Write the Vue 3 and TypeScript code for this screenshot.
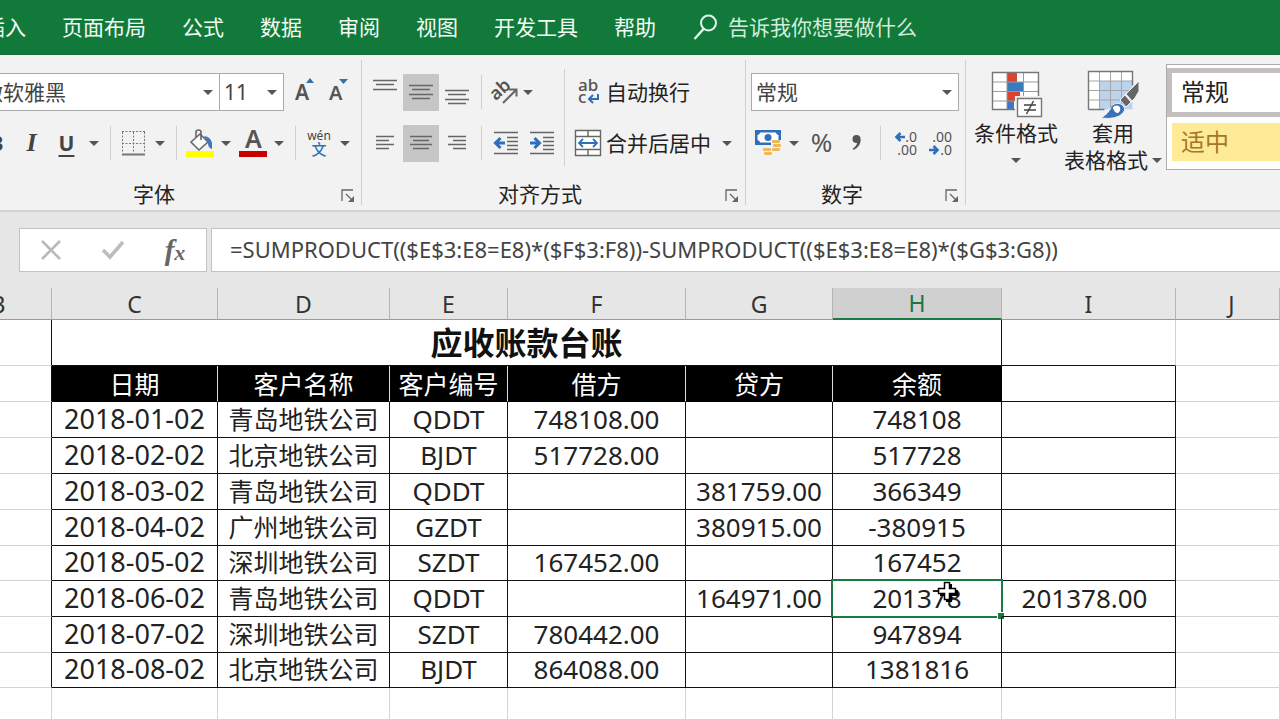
<script setup lang="ts">
import { ref } from 'vue'

interface Entry {
  date: string
  customer: string
  code: string
  debit: string
  credit: string
  balance: string
  check: string
}

const tabs: string[] = ['插入', '页面布局', '公式', '数据', '审阅', '视图', '开发工具', '帮助']
const columns: string[] = ['B', 'C', 'D', 'E', 'F', 'G', 'H', 'I', 'J']
const headings: string[] = ['日期', '客户名称', '客户编号', '借方', '贷方', '余额']

const entries: Entry[] = [
  { date: '2018-01-02', customer: '青岛地铁公司', code: 'QDDT', debit: '748108.00', credit: '', balance: '748108', check: '' },
  { date: '2018-02-02', customer: '北京地铁公司', code: 'BJDT', debit: '517728.00', credit: '', balance: '517728', check: '' },
  { date: '2018-03-02', customer: '青岛地铁公司', code: 'QDDT', debit: '', credit: '381759.00', balance: '366349', check: '' },
  { date: '2018-04-02', customer: '广州地铁公司', code: 'GZDT', debit: '', credit: '380915.00', balance: '-380915', check: '' },
  { date: '2018-05-02', customer: '深圳地铁公司', code: 'SZDT', debit: '167452.00', credit: '', balance: '167452', check: '' },
  { date: '2018-06-02', customer: '青岛地铁公司', code: 'QDDT', debit: '', credit: '164971.00', balance: '201378', check: '201378.00' },
  { date: '2018-07-02', customer: '深圳地铁公司', code: 'SZDT', debit: '780442.00', credit: '', balance: '947894', check: '' },
  { date: '2018-08-02', customer: '北京地铁公司', code: 'BJDT', debit: '864088.00', credit: '', balance: '1381816', check: '' },
]

const selectedRow = ref<number>(5)
const formula = ref<string>('=SUMPRODUCT(($E$3:E8=E8)*($F$3:F8))-SUMPRODUCT(($E$3:E8=E8)*($G$3:G8))')
</script>

<template>
  <div class="app">
    <nav class="tabs" aria-label="功能区">
      <button v-for="t in tabs" :key="t" type="button" class="tab">{{ t }}</button>
      <label class="tell">
        <svg width="26" height="28" viewBox="0 0 26 28" fill="none" stroke="#e6f5ea" stroke-width="2" aria-hidden="true">
          <circle cx="16.500" cy="10" r="7.500" /><path d="M11.500 16 2.500 26" stroke-width="2.400" />
        </svg>
        <input type="text" placeholder="告诉我你想要做什么" aria-label="告诉我你想要做什么" />
      </label>
    </nav>

    <div class="ribbon">
      <section class="group font-group">
        <div class="line">
          <span class="combo name">
            <select aria-label="字体名称"><option>微软雅黑</option></select>
            <i class="tri"></i>
          </span>
          <span class="combo size">
            <select aria-label="字号"><option>11</option></select>
            <i class="tri"></i>
          </span>
          <button type="button" class="ico first" aria-label="增大字号">
            <svg width="26" height="32" viewBox="0 0 26 32"><text x="3" y="24" class="g" font-size="21">A</text><path d="M14 7l4-5 4 5z" fill="#3b6fa5" /></svg>
          </button>
          <button type="button" class="ico" aria-label="减小字号">
            <svg width="26" height="32" viewBox="0 0 26 32"><text x="4" y="24" class="g" font-size="20">A</text><path d="M14 3h9l-4.500 5z" fill="#3b6fa5" /></svg>
          </button>
        </div>
        <div class="line second">
          <button type="button" class="mid bold">B</button>
          <button type="button" class="mid ital">I</button>
          <button type="button" class="mid under">U</button>
          <button type="button" class="drop" aria-label="下划线选项"><i class="tri"></i></button>
          <span class="sep"></span>
          <button type="button" class="ico" aria-label="边框">
            <svg width="25" height="26" viewBox="0 0 25 26" fill="none" stroke="#777" stroke-width="1"><path d="M1 1.500H24M1.500 2V23M12.500 2V23M23.500 2V23M1 13.500H24" stroke-dasharray="2 1.500" /><path d="M1 24.500H24" stroke-width="2" /></svg>
          </button>
          <button type="button" class="drop" aria-label="边框选项"><i class="tri"></i></button>
          <span class="sep"></span>
          <button type="button" class="ico" aria-label="填充颜色">
            <svg width="30" height="30" viewBox="0 0 30 30" fill="none"><rect x="1" y="23" width="28" height="6" fill="#ffff00" /><path d="M6 14 15 6l8 8-9 8z" fill="#fafafa" stroke="#666" stroke-width="1.600" /><path d="M11 9V4q0-2 2.500-2T16 4v8" stroke="#666" stroke-width="1.600" /><path d="M19 8q7 1 8 7v6q-4-1-4-6z" fill="#3d78b8" /></svg>
          </button>
          <button type="button" class="drop" aria-label="填充颜色选项"><i class="tri"></i></button>
          <button type="button" class="ico" aria-label="字体颜色">
            <svg width="30" height="30" viewBox="0 0 30 30"><text x="7" y="20" class="g" font-size="25">A</text><rect x="1" y="23" width="28" height="6" fill="#c80000" /></svg>
          </button>
          <button type="button" class="drop" aria-label="字体颜色选项"><i class="tri"></i></button>
          <span class="sep"></span>
          <button type="button" class="ico" aria-label="拼音指南">
            <svg width="26" height="30" viewBox="0 0 26 30"><text x="13" y="12" class="py" text-anchor="middle">wén</text><text x="13" y="27" class="wen" text-anchor="middle">文</text></svg>
          </button>
          <button type="button" class="drop" aria-label="拼音选项"><i class="tri"></i></button>
        </div>
        <div class="caption"><span>字体</span><button type="button" class="launch" aria-label="字体设置"><svg width="14" height="14" viewBox="0 0 14 14" fill="none" stroke="#666" stroke-width="1.300"><path d="M1 12V1H12M5 5l6 6" /><path d="M13 7v6H7z" fill="#666" stroke="none" /></svg></button></div>
      </section>

      <section class="group align-group">
        <div class="cols">
          <div class="left">
            <div class="line">
              <button type="button" class="al" aria-label="顶端对齐"><svg width="26" height="28" viewBox="0 0 26 28" class="st"><path d="M1 2.500H25M4 6.500H22M1 11.500H25" /></svg></button>
              <button type="button" class="al on" aria-label="垂直居中"><svg width="26" height="28" viewBox="0 0 26 28" class="st"><path d="M1 7.500H25M4 11.500H22M1 16.500H25M4 20.500H22" /></svg></button>
              <button type="button" class="al" aria-label="底端对齐"><svg width="26" height="28" viewBox="0 0 26 28" class="st"><path d="M1 12.500H25M4 16.500H22M1 21.500H25M4 25.500H22" /></svg></button>
              <span class="sep"></span>
              <button type="button" class="ico" aria-label="方向">
                <svg width="28" height="28" viewBox="0 0 28 28" fill="none"><text x="0" y="19" class="g" font-size="18" transform="rotate(-42 8 15)">ab</text><path d="M12 25 25 12M18 11.500h7.500v7" stroke="#666" stroke-width="2" /></svg>
              </button>
              <button type="button" class="drop slim" aria-label="方向选项"><i class="tri"></i></button>
            </div>
            <div class="line second">
              <button type="button" class="al" aria-label="左对齐"><svg width="20" height="20" viewBox="0 0 20 20" class="st"><path d="M1 3.500H19M1 7.500H14M1 11.500H19M1 15.500H14" /></svg></button>
              <button type="button" class="al on" aria-label="居中"><svg width="24" height="20" viewBox="0 0 24 20" class="st"><path d="M1 3.500H23M4 7.500H20M1 11.500H23M4 15.500H20" /></svg></button>
              <button type="button" class="al" aria-label="右对齐"><svg width="20" height="20" viewBox="0 0 20 20" class="st"><path d="M1 3.500H19M6 7.500H19M1 11.500H19M6 15.500H19" /></svg></button>
              <span class="sep"></span>
              <button type="button" class="al" aria-label="减少缩进量"><svg width="26" height="24" viewBox="0 0 26 24" class="st"><path d="M1 1.500H25M14 6.500H25M14 10.500H25M14 14.500H25M14 18.500H25M1 22.500H25" /><path d="M12 12H3M7.500 7l-5 5 5 5" stroke="#2f6fb7" stroke-width="3" /></svg></button>
              <button type="button" class="al" aria-label="增加缩进量"><svg width="26" height="24" viewBox="0 0 26 24" class="st"><path d="M1 1.500H25M14 6.500H25M14 10.500H25M14 14.500H25M14 18.500H25M1 22.500H25" /><path d="M1 12H9M5.500 7l5 5-5 5" stroke="#2f6fb7" stroke-width="3" /></svg></button>
            </div>
          </div>
          <div class="right">
            <div class="line">
              <button type="button" class="wide">
                <svg width="28" height="28" viewBox="0 0 28 28" fill="none"><text x="4" y="13" class="g wrap-text">ab</text><text x="4" y="25" class="g wrap-text">c</text><path d="M24 16v5h-9M19 17l-4 4 4 4" stroke="#2f6fb7" stroke-width="2" /></svg>
                自动换行
              </button>
            </div>
            <div class="line second">
              <button type="button" class="wide">
                <svg width="28" height="28" viewBox="0 0 28 28" fill="none" stroke="#666" stroke-width="1.400"><path d="M1.500 1.500h25v25h-25zM1.500 7.500h25M1.500 20.500h25M14 1.500v6M14 20.500v6" fill="#fff" /><path d="M5 14h18M9 10l-4 4 4 4M19 10l4 4-4 4" stroke="#2f6fb7" stroke-width="1.800" /></svg>
                合并后居中
              </button>
              <button type="button" class="drop merge" aria-label="合并选项"><i class="tri"></i></button>
            </div>
          </div>
        </div>
        <div class="caption"><span>对齐方式</span><button type="button" class="launch" aria-label="对齐设置"><svg width="14" height="14" viewBox="0 0 14 14" fill="none" stroke="#666" stroke-width="1.300"><path d="M1 12V1H12M5 5l6 6" /><path d="M13 7v6H7z" fill="#666" stroke="none" /></svg></button></div>
      </section>

      <section class="group num-group">
        <div class="line">
          <span class="combo fmt">
            <select aria-label="数字格式"><option>常规</option></select>
            <i class="tri"></i>
          </span>
        </div>
        <div class="line second">
          <button type="button" class="ico" aria-label="会计数字格式">
            <svg width="28" height="28" viewBox="0 0 28 28" fill="none"><path d="M1 1h26v15H1z" fill="#2f6fb7" /><path d="M6 3.500h16q0 2 2.500 2.500v5q-2.500.5-2.500 2.500H6q0-2-2.500-2.500V6Q6 5.500 6 3.500z" fill="#fff" /><circle cx="14" cy="8.500" r="3.500" fill="#2f6fb7" /><path d="M17 11h10v16H9v-9h8z" fill="#f2f2f2" /><g fill="#f0b85c"><rect x="18" y="11" width="8" height="3" rx="1" /><rect x="19" y="15" width="8" height="3" rx="1" /><rect x="18" y="19" width="8" height="3" rx="1" /><rect x="9" y="19" width="8" height="3" rx="1" /><rect x="10" y="23" width="8" height="3" rx="1" /></g></svg>
          </button>
          <button type="button" class="drop" aria-label="货币选项"><i class="tri"></i></button>
          <button type="button" class="mid pct">%</button>
          <button type="button" class="mid" aria-label="千位分隔样式"><svg width="12" height="18" viewBox="0 0 12 18"><circle cx="5.500" cy="5" r="4" fill="#555" /><path d="M9.500 5q1 7-7 11l-.7-1.300Q7 11 6 7z" fill="#555" /></svg></button>
          <span class="sep"></span>
          <button type="button" class="mid" aria-label="增加小数位数"><svg width="24" height="28" viewBox="0 0 24 28" fill="none"><path d="M12 8H4M7.500 4l-4 4 4 4" stroke="#2f6fb7" stroke-width="2.600" /><text x="24" y="13" class="dg" text-anchor="end">.0</text><text x="24" y="26" class="dg" text-anchor="end">.00</text></svg></button>
          <button type="button" class="mid" aria-label="减少小数位数"><svg width="24" height="28" viewBox="0 0 24 28" fill="none"><path d="M1 21H9M5.500 17l4 4-4 4" stroke="#2f6fb7" stroke-width="2.600" /><text x="24" y="13" class="dg" text-anchor="end">.00</text><text x="24" y="26" class="dg" text-anchor="end">.0</text></svg></button>
        </div>
        <div class="caption"><span>数字</span><button type="button" class="launch" aria-label="数字设置"><svg width="14" height="14" viewBox="0 0 14 14" fill="none" stroke="#666" stroke-width="1.300"><path d="M1 12V1H12M5 5l6 6" /><path d="M13 7v6H7z" fill="#666" stroke="none" /></svg></button></div>
      </section>

      <section class="styles">
        <button type="button" class="big">
          <svg width="52" height="50" viewBox="0 0 52 50" fill="none">
            <path d="M2.500 2.500h46v37h-46z" fill="#fff" />
            <path d="M17 3h10v9H17z" fill="#d9432f" /><path d="M17 12h16v9H17z" fill="#3a7abf" /><path d="M17 21h13v10H17z" fill="#d9432f" /><path d="M17 31h7v8h-7z" fill="#3a7abf" />
            <path d="M2.500 12h46M2.500 21.500h46M2.500 31h46M17 2.500v37M33.500 2.500v37" stroke="#999" />
            <path d="M2.500 2.500h46v37h-46z" stroke="#777" stroke-width="1.400" />
            <path d="M25 26h27v22H25z" fill="#f2f2f2" /><path d="M27.500 28.500h24v18h-24z" fill="#fff" stroke="#777" stroke-width="1.400" />
            <path d="M34 35h12M34 40h12M43.500 31l-7 13" stroke="#444" stroke-width="1.500" />
          </svg>
          <span>条件格式</span>
          <span class="under-row"><i class="tri"></i></span>
        </button>
        <button type="button" class="big table-style">
          <svg width="54" height="50" viewBox="0 0 54 50" fill="none">
            <path d="M2.500 1.500h44v38h-44z" fill="#fff" /><path d="M13.500 11h33v28.500h-33z" fill="#bcd3ee" />
            <path d="M2.500 11h44M2.500 20.500h44M2.500 30h44M13.500 1.500v38M24.500 1.500v38M35.500 1.500v38" stroke="#a5a5a5" />
            <path d="M2.500 39.500v-38h44v14M2.500 39.500h16" stroke="#777" stroke-width="1.400" />
            <path d="M53 11 34 30l6 7 9-9 4-7z" fill="#666" stroke="#f2f2f2" /><path d="M39 24l7 8" stroke="#f2f2f2" stroke-width="2" />
            <path d="M15 48q7-4 10-10 4-6 10-4 6 4 2 9-6 7-22 5z" fill="#3a72b8" stroke="#f2f2f2" /><path d="M26 37q4-4 8-1 3 4-2 8-5-1-6-7z" fill="#fff" stroke="#3a72b8" stroke-width="1.500" />
          </svg>
          <span>套用</span>
          <span class="under-row">表格格式<i class="tri"></i></span>
        </button>
        <div class="gallery">
          <button type="button" class="swatch picked">常规</button>
          <button type="button" class="swatch medium">适中</button>
        </div>
      </section>
    </div>

    <div class="formula-bar">
      <div class="actions">
        <button type="button" aria-label="取消"><svg width="22" height="22" viewBox="0 0 22 22" fill="none" stroke="#b9b9b9" stroke-width="2.600"><path d="M2 2l18 18M20 2 2 20" /></svg></button>
        <button type="button" aria-label="输入"><svg width="24" height="20" viewBox="0 0 24 20" fill="none" stroke="#bdbdbd" stroke-width="3.600"><path d="M2 10l7 7L22 2" /></svg></button>
        <button type="button" class="fx" aria-label="插入函数"><span>f</span><small>x</small></button>
      </div>
      <input v-model="formula" type="text" class="formula" aria-label="编辑栏" />
    </div>

    <div class="sheet">
      <table>
        <colgroup>
          <col v-for="c in columns" :key="c" :class="'c-' + c" />
        </colgroup>
        <thead>
          <tr>
            <th v-for="c in columns" :key="c" scope="col" :class="{ active: c === 'H', last: c === 'J' }">{{ c }}</th>
          </tr>
        </thead>
        <tbody>
          <tr class="title">
            <td class="edge"></td>
            <td colspan="6" class="box big-title">应收账款台账</td>
            <td class="base"></td>
            <td></td>
          </tr>
          <tr class="heads">
            <td class="edge"></td>
            <td v-for="h in headings" :key="h" class="head">{{ h }}</td>
            <td class="box"></td>
            <td></td>
          </tr>
          <tr v-for="(e, i) in entries" :key="e.date">
            <td class="edge"></td>
            <td class="box date">{{ e.date }}</td>
            <td class="box han">{{ e.customer }}</td>
            <td class="box">{{ e.code }}</td>
            <td class="box">{{ e.debit }}</td>
            <td class="box">{{ e.credit }}</td>
            <td class="box" @click="selectedRow = i">
              {{ e.balance }}
              <span v-if="i === selectedRow" class="ring"></span>
              <svg v-if="i === selectedRow" class="pointer" width="22" height="22" viewBox="0 0 22 22" aria-hidden="true"><path d="M9 3h6v6h6v6h-6v6H9v-6H3V9h6z" fill="#000" /><path d="M7.500 1.500h5v6h6v5h-6v6h-5v-6h-6v-5h6z" fill="#fff" stroke="#000" stroke-width="1.500" /></svg>
            </td>
            <td class="box check">{{ e.check }}</td>
            <td></td>
          </tr>
          <tr class="blank">
            <td v-for="c in columns" :key="c"></td>
          </tr>
        </tbody>
      </table>
    </div>
  </div>
</template>

<style>
body {
  margin: 0;
  background: #fff;
}
</style>

<style scoped>
.app {
  min-height: 100vh;
  overflow: hidden;
  background: #fff;
  color: #222;
  font-family: "Noto Sans", "Noto Sans CJK SC", sans-serif;
  font-size: 21px;
}
button,
input,
select {
  box-sizing: border-box;
  margin: 0;
  padding: 0;
  border: 0;
  border-radius: 0;
  background: none;
  color: inherit;
  font: inherit;
  outline: none;
}
button {
  flex: none;
  white-space: nowrap;
}
svg {
  display: block;
  flex: none;
  overflow: visible;
}

/* tab strip */
.tabs {
  display: flex;
  align-items: center;
  gap: 36px;
  height: 55px;
  box-sizing: border-box;
  margin-left: -16px;
  background: #117a3b;
  border-bottom: 1px solid #1b6b3c;
  color: #f4fbf5;
}
.tab {
  line-height: 28px;
}
.tell {
  display: flex;
  flex: 1;
  align-items: center;
  gap: 10px;
}
.tell input {
  flex: 1;
  min-width: 0;
  line-height: 28px;
}
.tell input::placeholder {
  color: #d3ecd9;
  opacity: 1;
}

/* ribbon */
.ribbon {
  display: flex;
  height: 155px;
  margin-left: -26px;
  background: #f2f2f2;
  border-bottom: 2px solid #d2d2d2;
}
.group {
  position: relative;
  flex: none;
  box-sizing: border-box;
  padding-top: 18px;
}
.group::after {
  content: "";
  position: absolute;
  top: 5px;
  right: 0;
  bottom: 5px;
  width: 1px;
  background: #d0d0d0;
}
.font-group {
  width: 388px;
}
.align-group {
  width: 384px;
}
.num-group {
  width: 220px;
  padding-left: 5px;
}
.line {
  display: flex;
  align-items: center;
  height: 38px;
}
.line.second {
  margin-top: 13px;
}
.font-group .second {
  padding-left: 5px;
}
.combo {
  position: relative;
  flex: none;
  box-sizing: border-box;
  height: 38px;
  border: 1px solid #ababab;
  background: #fff;
  color: #444;
}
.combo select {
  width: 100%;
  height: 36px;
  padding-left: 4px;
  appearance: none;
}
.combo .tri {
  position: absolute;
  right: 6px;
  top: 16px;
}
.name {
  width: 246px;
}
.name select {
  padding-left: 7px;
}
.size {
  width: 65px;
  margin-left: -1px;
}
.fmt {
  width: 208px;
}
.tri {
  display: block;
  width: 0;
  height: 0;
  border: 5px solid transparent;
  border-top-color: #555;
  border-bottom: 0;
}
.ico,
.mid,
.al,
.drop {
  display: flex;
  align-items: center;
  justify-content: center;
  height: 37px;
}
.ico {
  width: 33px;
}
.ico.first {
  margin-left: 4px;
}
.mid {
  width: 35px;
  color: #444;
}
.al {
  width: 36px;
}
.al.on {
  background: #c6c6c6;
}
.drop {
  width: 20px;
}
.drop.slim {
  width: 14px;
}
.sep {
  flex: none;
  width: 1px;
  height: 34px;
  margin: 0 6px;
  background: #d0d0d0;
}
.bold {
  font-weight: 700;
  font-size: 21px;
}
.ital {
  font-family: "Liberation Serif", serif;
  font-style: italic;
  font-weight: 700;
  font-size: 26px;
}
.under {
  font-weight: 700;
  font-size: 21px;
  text-decoration: underline;
  text-decoration-thickness: 2px;
  text-underline-offset: 4px;
}
.pct {
  font-size: 26px;
  line-height: 32px;
  padding-bottom: 2px;
  color: #555;
}
.g {
  fill: #555;
  font-weight: 600;
}
.wrap-text {
  font-size: 17px;
  font-weight: 500;
}
.py {
  fill: #444;
  font-size: 12px;
}
.wen {
  fill: #2f74b5;
  font-size: 15px;
  font-weight: 500;
}
.dg {
  fill: #555;
  font-size: 14px;
}
.st {
  fill: none;
  stroke: #666;
  stroke-width: 1.500;
}
.cols {
  display: flex;
}
.left {
  position: relative;
  width: 203px;
  padding-left: 5px;
  box-sizing: border-box;
}
.left::after {
  content: "";
  position: absolute;
  top: -4px;
  right: 0;
  bottom: -4px;
  width: 1px;
  background: #d0d0d0;
}
.right {
  padding-left: 9px;
}
.wide {
  display: flex;
  align-items: center;
  gap: 4px;
  line-height: 28px;
}
.merge {
  margin-left: 6px;
}
.caption {
  display: flex;
  align-items: center;
  height: 26px;
  margin-top: 19px;
}
.num-group .caption {
  margin-left: -5px;
}
.caption span {
  flex: 1;
  text-align: center;
  line-height: 26px;
}
.launch {
  display: flex;
  align-items: center;
  justify-content: center;
  width: 28px;
  height: 26px;
  padding-top: 4px;
}
.styles {
  display: flex;
  flex: 1;
  min-width: 0;
  padding-left: 2px;
}
.big {
  display: flex;
  flex-direction: column;
  align-items: center;
  width: 96px;
  height: 120px;
  padding-top: 15px;
  line-height: 27px;
}
.table-style {
  width: 98px;
}
.under-row {
  display: flex;
  align-items: center;
  gap: 4px;
  height: 26px;
}
.gallery {
  flex: 1;
  min-width: 0;
  height: 106px;
  margin: 9px 0 0 4px;
  box-sizing: border-box;
  padding: 3px 0 0;
  border: 1px solid #ababab;
  border-right: 0;
  background: #fff;
}
.swatch {
  display: block;
  width: 100%;
  text-align: left;
  font-size: 24px;
}
.picked {
  height: 49px;
  padding: 0 0 4px 9px;
  border: 5px solid #c3bfc0;
  border-right: 0;
  color: #222;
}
.medium {
  width: calc(100% - 5px);
  height: 38px;
  margin: 6px 0 0 5px;
  padding: 0 0 4px 9px;
  background: #ffeb97;
  color: #a5762a;
}

/* formula bar */
.formula-bar {
  display: flex;
  gap: 4px;
  padding: 16px 0 16px 19px;
  background: #e6e6e6;
}
.actions {
  display: flex;
  align-items: center;
  justify-content: space-around;
  box-sizing: border-box;
  width: 188px;
  height: 44px;
  border: 1px solid #c3c3c3;
  background: #fff;
}
.actions button {
  display: flex;
  align-items: center;
  justify-content: center;
  width: 40px;
  height: 40px;
}
.fx {
  font-family: "Liberation Serif", serif;
  font-style: italic;
  font-weight: 700;
  font-size: 29px;
  line-height: 36px;
  color: #666;
}
.fx small {
  font-size: 22px;
  padding-top: 6px;
}
.formula {
  flex: 1;
  min-width: 0;
  height: 44px;
  padding: 0 0 2px 18px;
  border: 1px solid #c3c3c3;
  border-right: 0;
  background: #fff;
  color: #444;
  font-size: 22px;
}

/* worksheet */
.sheet {
  margin-left: -55px;
}
table {
  width: 100%;
  table-layout: fixed;
  border-collapse: separate;
  border-spacing: 0;
}
.c-B { width: 107px; }
.c-C { width: 166px; }
.c-D { width: 172px; }
.c-E { width: 118px; }
.c-F { width: 178px; }
.c-G { width: 147px; }
.c-H { width: 169px; }
.c-I { width: 174px; }
th,
td {
  box-sizing: border-box;
  padding: 0;
  text-align: center;
  white-space: nowrap;
  line-height: 30px;
}
th {
  height: 32px;
  background: #e6e6e6;
  border-right: 1px solid #b4b4b4;
  border-bottom: 1px solid #9b9b9b;
  font-size: 23px;
  font-weight: 400;
  color: #333;
}
th.active {
  background: #d0d0d0;
  border-bottom: 2px solid #1a7a42;
  color: #217346;
}
th.last {
  padding-left: 8px;
}
td {
  position: relative;
  height: 36px;
  padding-bottom: 2px;
  border-right: 1px solid #d4d4d4;
  border-bottom: 1px solid #d4d4d4;
  font-size: 26px;
  color: #222;
}
tbody tr:nth-child(3n + 7) td {
  height: 35px;
}
tbody .title td {
  height: 46px;
}
tbody .blank td {
  height: 32px;
}
.edge {
  border-right-color: #111;
}
.base {
  border-bottom-color: #111;
}
.box {
  border-color: #111;
}
.date {
  font-size: 27px;
}
.check {
  padding-right: 8px;
}
.big-title {
  padding-bottom: 0;
  font-size: 32px;
  font-weight: 700;
  line-height: 40px;
  color: #111;
}
.head {
  padding-bottom: 0;
  background: #000;
  border-right-color: #ddd;
  border-bottom-color: #000;
  color: #fff;
  font-size: 25px;
}
.head:nth-child(7) {
  border-right-color: #000;
}
.han {
  font-size: 25px;
}
.ring {
  position: absolute;
  inset: -2px;
  border: 2px solid #1a7a42;
}
.ring::after {
  content: "";
  position: absolute;
  right: -4px;
  bottom: -4px;
  width: 6px;
  height: 6px;
  border: 1px solid #fff;
  background: #1a7a42;
}
.pointer {
  position: absolute;
  left: 104px;
  top: 0;
}
</style>
